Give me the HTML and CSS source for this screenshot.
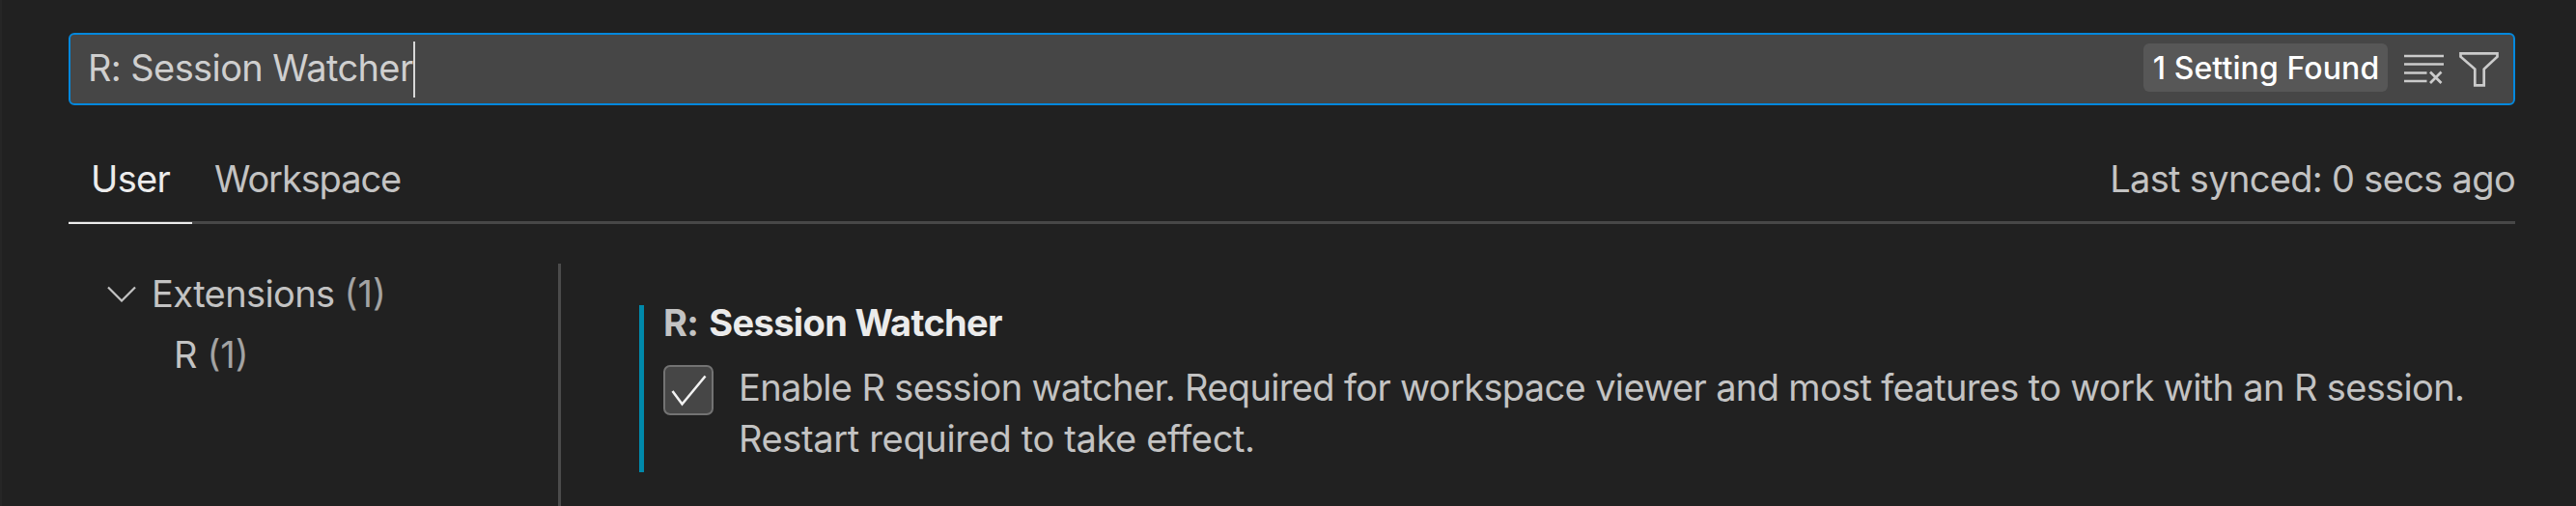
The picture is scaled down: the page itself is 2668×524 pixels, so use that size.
FILE: index.html
```html
<!DOCTYPE html>
<html lang="en">
<head>
<meta charset="utf-8">
<title>Settings</title>
<link rel="stylesheet" href="styles.css">
</head>
<body>
<main class="settings">
  <div class="search">
    <span class="query">R: Session Watcher</span><span class="caret"></span>
    <span class="badge"><span class="badge-text">1 Setting Found</span></span>
    <svg class="icon clear" width="42" height="32" viewBox="0 0 42 32" fill="none" stroke="currentColor" stroke-width="2.7"><path d="M0 2h41M0 10.500h41M0 19.500h23.500M0 28h23.500M27 18.500l11.500 11.500M38.500 18.500L27 30"/></svg>
    <svg class="icon filter" width="42" height="38" viewBox="0 0 42 38" fill="none" stroke="currentColor" stroke-width="2.700"><path d="M1.500 2.400h38v3.300L25.700 18.500v16.800H16.300V18.500L1.500 5.700z"/></svg>
  </div>
  <nav class="tabs">
    <div class="tab active"><span class="user">User</span></div>
    <div class="tab"><span class="workspace">Workspace</span></div>
    <div class="sync"><span class="sync-text">Last synced: 0 secs ago</span></div>
  </nav>
  <div class="body">
    <aside class="tree">
      <div class="row">
        <svg class="chevron" width="30" height="17" viewBox="0 0 30 17" fill="none" stroke="currentColor" stroke-width="2.200"><path d="M1 1.500L15 15.500L29 1.500"/></svg>
        <span class="ext">Extensions</span><span class="count">(1)</span>
      </div>
      <div class="row child"><span>R</span><span class="count">(1)</span></div>
    </aside>
    <section class="detail">
      <article class="item">
        <h2 class="title"><span class="category">R:</span><span class="name">Session Watcher</span></h2>
        <div class="option">
          <span class="checkbox"><svg width="48" height="48" viewBox="0 0 48 48" fill="none" stroke="currentColor" stroke-width="2.600"><path d="M7.500 25L17.500 38.500L41.500 9.500"/></svg></span>
          <p class="desc"><span class="line1">Enable R session watcher. Required for workspace viewer and most features to work with an R session.</span><br><span class="line2">Restart required to take effect.</span></p>
        </div>
      </article>
    </section>
  </div>
</main>
</body>
</html>
```
FILE: styles.css
```css
* { box-sizing: border-box; }
body {
  margin: 0;
  background: #212121;
  color: #c3c3c3;
  font: 425 38px/53px Inter, "Liberation Sans", sans-serif;
  white-space: nowrap;
}
.settings {
  height: 524px;
  padding: 34px 63px 0 69px;
  border-left: 2px solid #262626;
  overflow: hidden;
  display: flex;
  flex-direction: column;
}
.search {
  display: flex;
  align-items: center;
  height: 75px;
  padding: 0 14px 0 18px;
  border: 2px solid #0488dd;
  border-radius: 6px;
  background: #464646;
  color: #cfcfcf;
}
.query { margin-top: -2px; letter-spacing: -0.6px; }
.caret { width: 2px; height: 58px; background: #d8d8d8; }
.badge {
  margin-left: auto;
  width: 253px;
  height: 50px;
  margin-top: -3px;
  padding-left: 1px;
  border-radius: 6px;
  background: #575757;
  color: #fff;
  font-size: 32px;
  font-weight: 450;
  line-height: 51px;
  letter-spacing: 0.1px;
  text-align: center;
}
.icon { color: #cbcbcb; flex: none; }
.clear { margin-left: 17px; }
.filter { margin-left: 15px; }
.tabs {
  display: flex;
  height: 123px;
  padding-top: 50px;
  border-bottom: 3px solid #484848;
}
.tab { height: 73px; padding: 0 23px; }
.tab.active {
  width: 128px;
  color: #ececec;
  border-bottom: 2px solid #ececec;
}
.user { letter-spacing: -0.65px; }
.workspace { letter-spacing: -1.1px; }
.sync { margin-left: auto; letter-spacing: -0.68px; }
.body { display: flex; flex: 1; padding-top: 41px; }
.tree { flex: none; width: 510px; border-right: 3px solid #4b4b4b; }
.row { display: flex; align-items: center; height: 63px; padding-left: 40px; }
.chevron { margin-right: 16px; }
.ext { letter-spacing: -0.6px; }
.child { padding-left: 109px; }
.count { margin-left: 10px; color: #a3a3a3; }
.detail { padding: 43px 0 0 81px; }
.item { height: 173px; padding-left: 20px; border-left: 5px solid #0089ab; }
.title {
  display: flex;
  gap: 11px;
  margin: 0;
  height: 53px;
  line-height: 36px;
  font-size: 38px;
  font-weight: 700;
  letter-spacing: -0.65px;
}
.name { color: #ebebeb; }
.option { display: flex; }
.checkbox {
  width: 52px;
  height: 52px;
  margin-top: 9px;
  border: 2px solid #737373;
  border-radius: 7px;
  background: #464646;
  color: #f2f2f2;
}
.checkbox svg { display: block; }
.desc { margin: 6px 0 0 26px; }
.line1 { letter-spacing: -0.65px; }
.line2 { letter-spacing: -0.35px; }
```
